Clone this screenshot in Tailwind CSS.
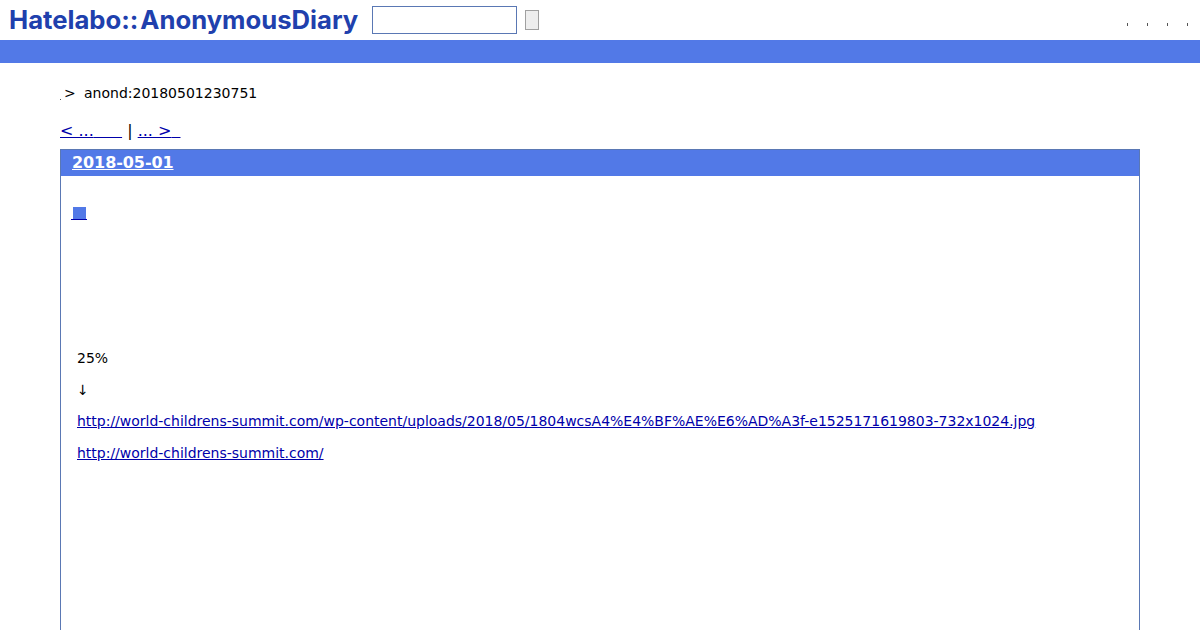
<!DOCTYPE html>
<html lang="ja">
<head>
  <meta charset="UTF-8" />
  <title>anond:20180501230751</title>
  <script src="https://cdn.jsdelivr.net/npm/@tailwindcss/browser@4"></script>
</head>
<body class="bg-white text-black font-['DejaVu_Sans',sans-serif] text-[14px] h-[630px] overflow-hidden">

  <!-- header -->
  <div class="h-10 flex items-center">
    <a href="#" class="ml-[9px] w-[351px] font-['Inter',sans-serif] font-bold text-[25.65px] leading-none text-[#2040ad] whitespace-nowrap mb-[1px]">Hatelabo::<span class="ml-[2px]">AnonymousDiary</span></a>
    <input type="text" class="ml-[12px] w-[145px] h-[28px] border border-[#5a78b4] bg-white outline-none" />
    <button class="ml-[8px] w-[14px] h-[20px] border border-[#a0a0a0] bg-[#eeeeee]"></button>
    <div class="ml-auto mr-[12px] mt-[8px] flex gap-[19px]">
      <span class="w-px h-[3px] bg-[#555]"></span>
      <span class="w-px h-[3px] bg-[#555]"></span>
      <span class="w-px h-[3px] bg-[#555]"></span>
      <span class="w-px h-[3px] bg-[#555]"></span>
    </div>
  </div>
  <div class="h-[23px] bg-[#5279e7]"></div>

  <!-- breadcrumb -->
  <div class="mx-[60px] mt-[22px] flex items-center h-4 leading-4">
    <span class="w-[4px] h-[14px] flex items-end"><span class="w-px h-px bg-[#555]"></span></span>
    <span class="w-[20px]">&gt;</span>
    <span>anond:20180501230751</span>
  </div>

  <!-- pager -->
  <div class="mx-[60px] mt-[20px] h-[20px] text-[16px] leading-[20px] whitespace-pre"><a href="#" class="text-[#0000aa] underline">&lt; ...<span class="tracking-[2px]">    </span></a> | <a href="#" class="text-[#0000aa] underline">... &gt;<span class="tracking-[4px]"> </span></a></div>

  <!-- day -->
  <div class="mx-[60px] mt-[8px] border border-[#5a78b4] h-[600px]">
    <h2 class="bg-[#5279e7] h-[26px] pl-[11px] text-white font-bold text-[16px] leading-[26px] tracking-[-0.08px]">
      <a href="#" class="underline">2018-05-01</a>
    </h2>
    <div class="pl-[10px] pt-[26px]">
      <a href="#" class="flex items-end w-[16px] h-[18px] pl-[2px] border-b border-[#0000aa]"><span class="w-[13px] h-[12px] bg-[#5279e7]"></span></a>
    </div>
    <div class="pl-4 pt-[129px] flex flex-col gap-[13.5px] leading-[18px] tracking-[-0.01px]">
      <p>25%</p>
      <p>↓</p>
      <p><a href="#" class="text-[#0000aa] underline">http://world-childrens-summit.com/wp-content/uploads/2018/05/1804wcsA4%E4%BF%AE%E6%AD%A3f-e1525171619803-732x1024.jpg</a></p>
      <p><a href="#" class="text-[#0000aa] underline">http://world-childrens-summit.com/</a></p>
    </div>
  </div>
</body>
</html>
